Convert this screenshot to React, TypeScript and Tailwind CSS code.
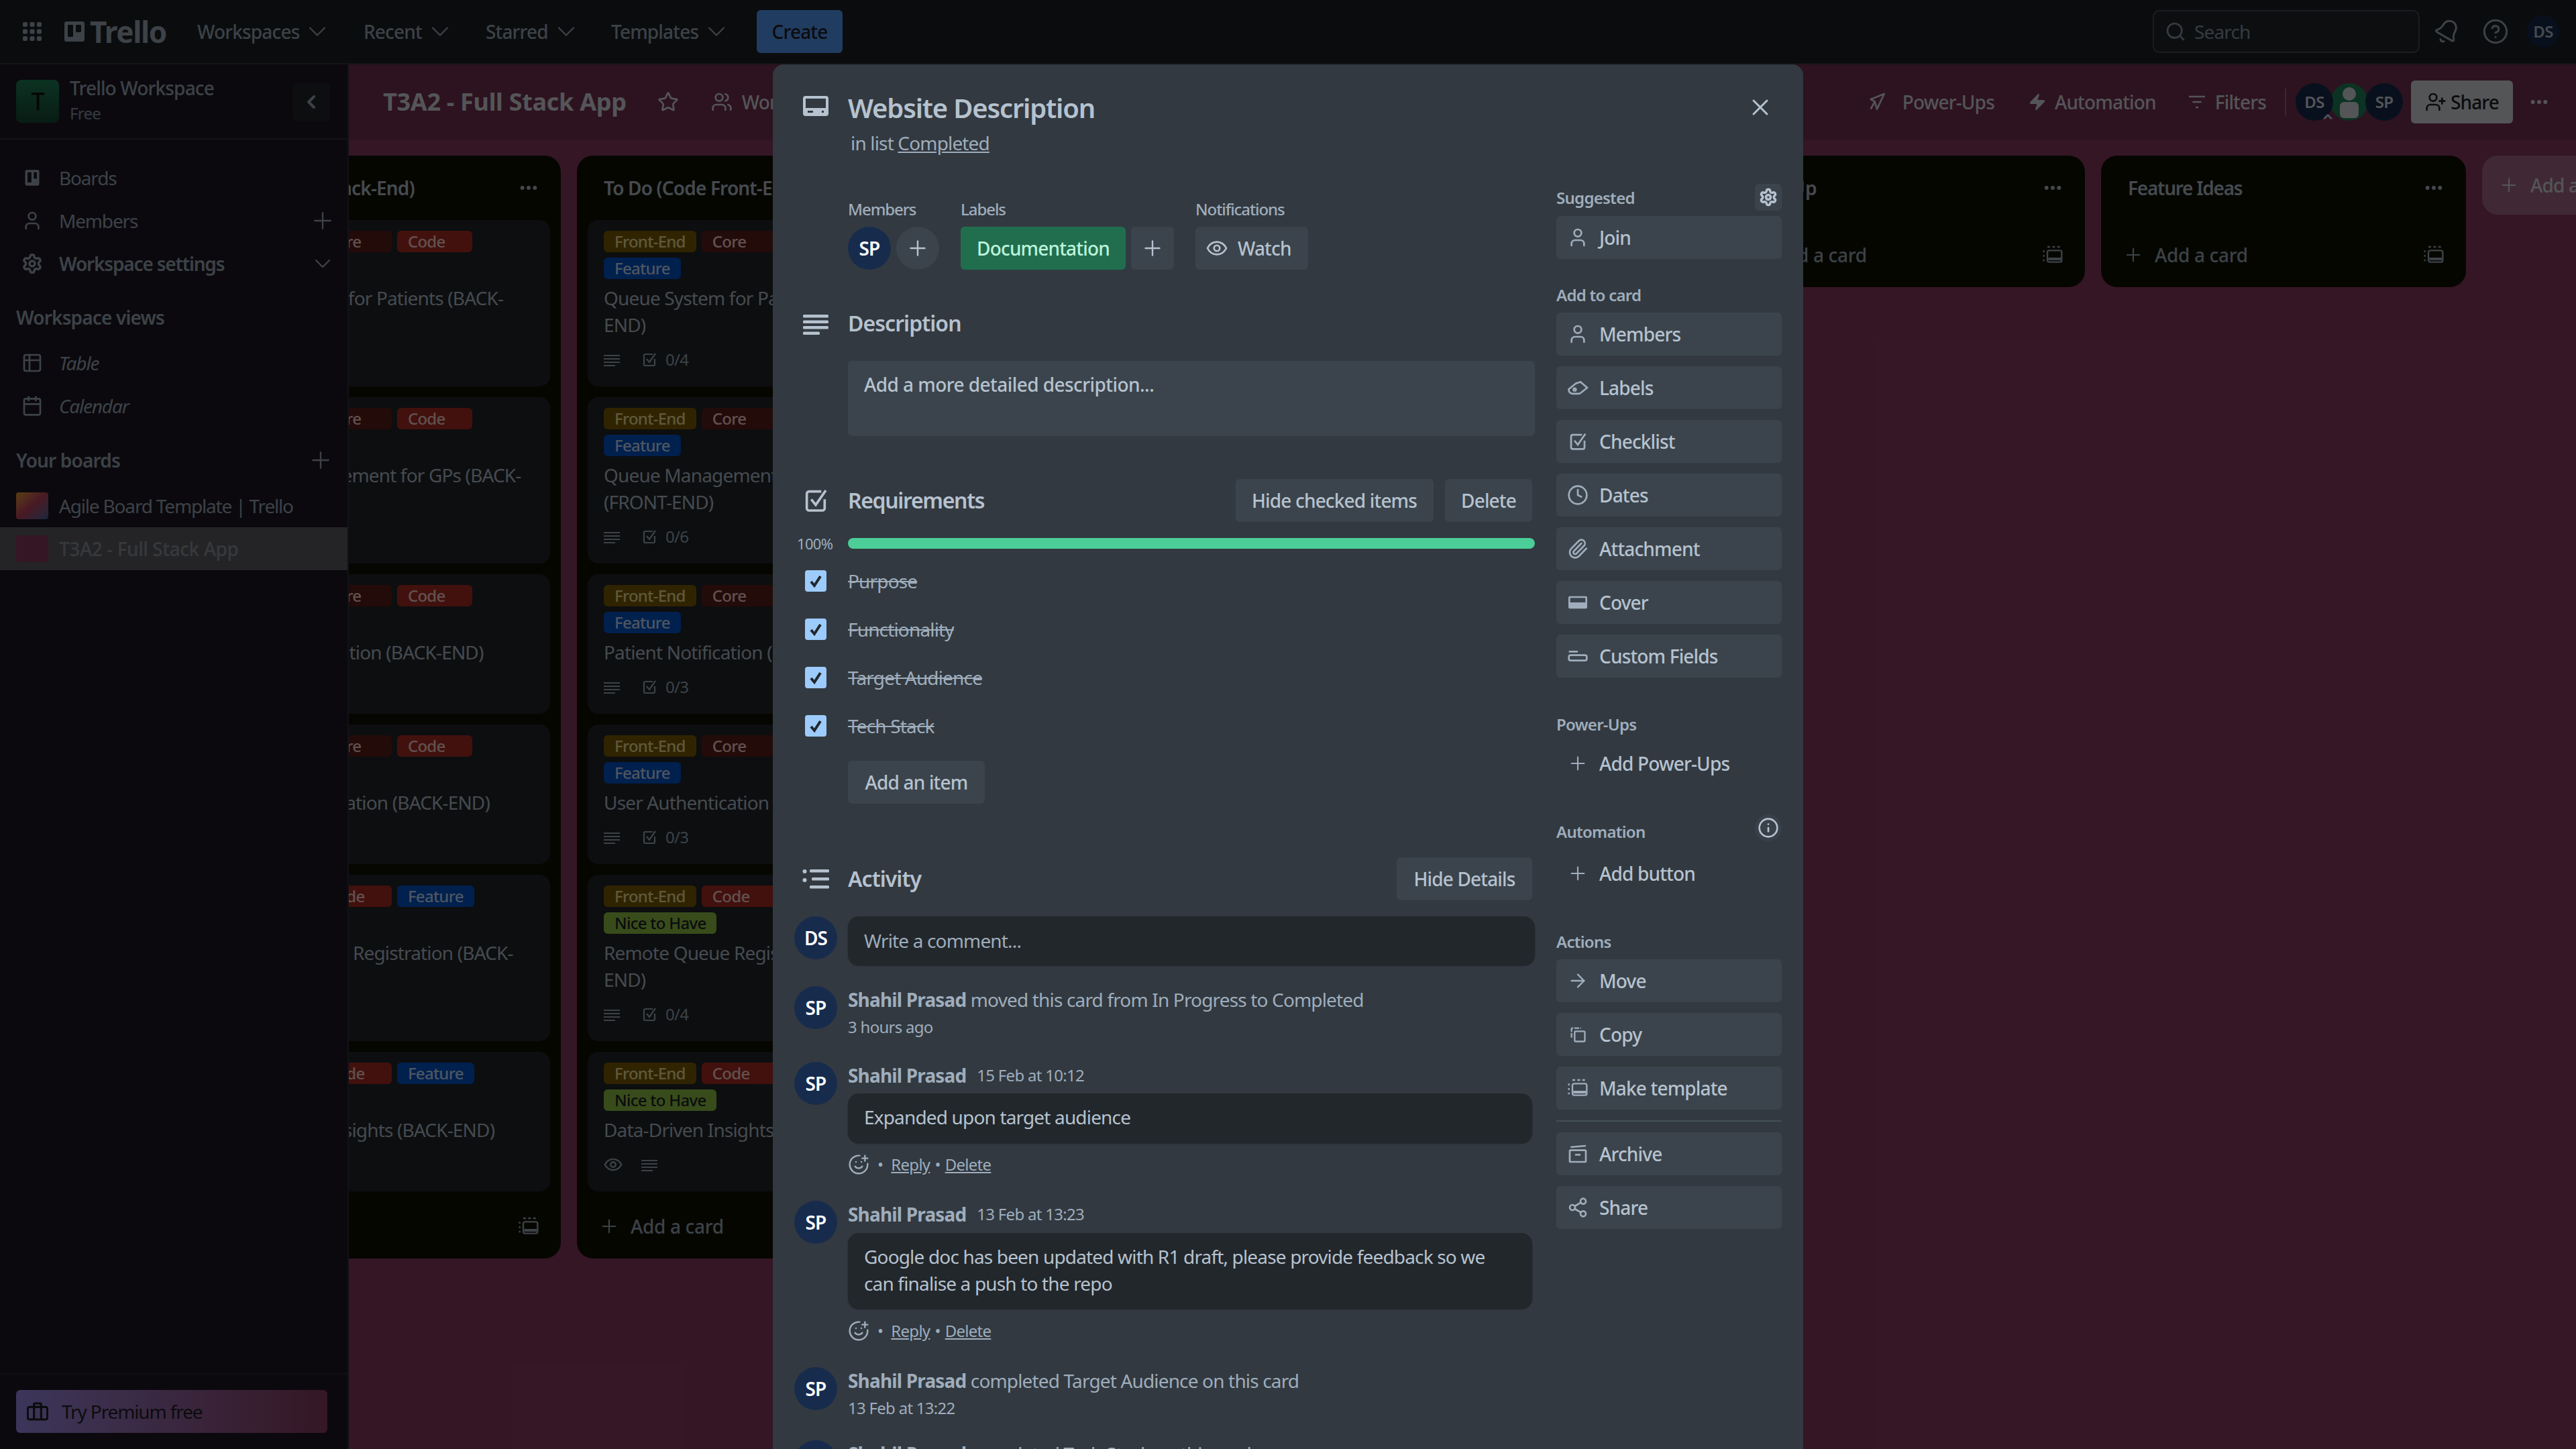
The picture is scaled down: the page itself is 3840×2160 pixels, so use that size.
import React from "react";
import { Star, ChevronDown, ChevronLeft, Plus, X, Search, Bell, CircleHelp, Zap, User, Clock, Paperclip, ArrowRight, Share2, Info, Settings, Users, UserPlus, SmilePlus, Ellipsis, Table2, Calendar } from "lucide-react";

type IP = { className?: string };
const Grid = ({ className }: IP) => (
  <svg className={className} viewBox="0 0 28 28" fill="currentColor">
    {[0, 10.5, 21].map((y) => [0, 10.5, 21].map((x) => <rect key={`${x}-${y}`} x={x} y={y} width="7" height="7" rx="2" />))}
  </svg>
);
const TrelloMark = ({ className }: IP) => (
  <svg className={className} viewBox="0 0 30 30" fill="currentColor">
    <path fillRule="evenodd" d="M3 0h24a3 3 0 0 1 3 3v24a3 3 0 0 1-3 3H3a3 3 0 0 1-3-3V3a3 3 0 0 1 3-3Zm3 5a1 1 0 0 0-1 1v16a1 1 0 0 0 1 1h6a1 1 0 0 0 1-1V6a1 1 0 0 0-1-1H6Zm12 0a1 1 0 0 0-1 1v9a1 1 0 0 0 1 1h6a1 1 0 0 0 1-1V6a1 1 0 0 0-1-1h-6Z" />
  </svg>
);
const CardIc = ({ className }: IP) => (
  <svg className={className} viewBox="0 0 38 30" fill="currentColor">
    <path fillRule="evenodd" d="M4 0h30a4 4 0 0 1 4 4v22a4 4 0 0 1-4 4H4a4 4 0 0 1-4-4V4a4 4 0 0 1 4-4Zm0 4v14h30V4H4Zm3 18v3h8v-3H7Zm24 0h-3v3h3v-3Z" />
  </svg>
);
const DescIc = ({ className }: IP) => (
  <svg className={className} viewBox="0 0 38 30" fill="currentColor">
    <rect x="0" y="0" width="38" height="4.5" rx="1.5" /><rect x="0" y="8.5" width="38" height="4.5" rx="1.5" /><rect x="0" y="17" width="38" height="4.5" rx="1.5" /><rect x="0" y="25.5" width="25" height="4.5" rx="1.5" />
  </svg>
);
const CheckIc = ({ className }: IP) => (
  <svg className={className} viewBox="0 0 24 24" fill="none" stroke="currentColor" strokeWidth="2.2">
    <path d="M20 11v8a2 2 0 0 1-2 2H6a2 2 0 0 1-2-2V6a2 2 0 0 1 2-2h11" /><path d="M8 11l4 5 9-13" />
  </svg>
);
const ActIc = ({ className }: IP) => (
  <svg className={className} viewBox="0 0 40 30" fill="currentColor">
    <circle cx="3.5" cy="4" r="3" /><circle cx="3.5" cy="17" r="3" /><rect x="11" y="1" width="29" height="4.5" rx="1.5" /><rect x="14" y="13" width="26" height="4.5" rx="1.5" /><rect x="11" y="25" width="29" height="4.5" rx="1.5" />
  </svg>
);
const LinesIc = ({ className }: IP) => (
  <svg className={className} viewBox="0 0 24 24" fill="currentColor">
    <rect x="0" y="5" width="24" height="2" /><rect x="0" y="10" width="24" height="2" /><rect x="0" y="15" width="24" height="2" /><rect x="0" y="20" width="17" height="2" />
  </svg>
);
const TemplateIc = ({ className }: IP) => (
  <svg className={className} viewBox="0 0 24 24" fill="none" stroke="currentColor" strokeWidth="1.8">
    <rect x="6" y="7" width="16" height="13" rx="2" /><path d="M7 16.5h14" strokeWidth="3" /><path d="M2 7v2M2 12v2M2 17v2M6 3h3M11.5 3h3M17 3h3" />
  </svg>
);
const TagIc = ({ className }: IP) => (
  <svg className={className} viewBox="0 0 24 24" fill="none" stroke="currentColor" strokeWidth="2">
    <path d="M2 13.5 9.5 7.5a3 3 0 0 1 1.5-.6L15 5.5l7.5 6.5-7.5 6a3 3 0 0 1-2 .6H6a4 4 0 0 1-4-4.6Z" /><circle cx="8.5" cy="14" r="1.4" />
  </svg>
);
const CoverIc = ({ className }: IP) => (
  <svg className={className} viewBox="0 0 24 24" fill="currentColor">
    <path fillRule="evenodd" d="M3 5h18a1.5 1.5 0 0 1 1.5 1.5v11A1.5 1.5 0 0 1 21 19H3a1.5 1.5 0 0 1-1.5-1.5v-11A1.5 1.5 0 0 1 3 5Zm.5 2v5h17V7h-17Z" />
  </svg>
);
const FieldsIc = ({ className }: IP) => (
  <svg className={className} viewBox="0 0 24 24" fill="none" stroke="currentColor" strokeWidth="2">
    <path d="M2 7h10" /><rect x="2" y="11" width="20" height="6" rx="2" />
  </svg>
);
const CopyIc = ({ className }: IP) => (
  <svg className={className} viewBox="0 0 24 24" fill="none" stroke="currentColor" strokeWidth="2">
    <rect x="8" y="8" width="13" height="13" rx="1" /><path d="M4 16V5a1 1 0 0 1 1-1h11" strokeDasharray="6 1.5" />
  </svg>
);
const ArchiveIc = ({ className }: IP) => (
  <svg className={className} viewBox="0 0 24 24" fill="none" stroke="currentColor" strokeWidth="2">
    <path d="M4 4.5 21 3" /><rect x="3" y="8" width="18" height="13" rx="1" /><path d="M9 13h6" />
  </svg>
);
const BoardIc = ({ className }: IP) => (
  <svg className={className} viewBox="0 0 24 24" fill="currentColor">
    <path fillRule="evenodd" d="M5 2h14a2 2 0 0 1 2 2v16a2 2 0 0 1-2 2H5a2 2 0 0 1-2-2V4a2 2 0 0 1 2-2Zm1 3v13h5V5H6Zm8 0v8h4V5h-4Z" />
  </svg>
);
const WatchIc = ({ className }: IP) => (
  <svg className={className} viewBox="0 0 24 24" fill="none" stroke="currentColor" strokeWidth="2">
    <path d="M1.5 12C4 7 8 5 12 5s8 2 10.5 7c-2.5 5-6.5 7-10.5 7s-8-2-10.5-7Z" /><circle cx="12" cy="12" r="3.2" />
  </svg>
);
const FilterIc = ({ className }: IP) => (
  <svg className={className} viewBox="0 0 24 24" fill="none" stroke="currentColor" strokeWidth="2">
    <path d="M3 6h18M7 12h10M10.5 18h3" />
  </svg>
);
const RocketIc = ({ className }: IP) => (
  <svg className={className} viewBox="0 0 24 24" fill="none" stroke="currentColor" strokeWidth="2" strokeLinejoin="round">
    <path d="M20 3 5 9l4.500 2.500L12 20 20 3Z" /><path d="M9.500 11.500 5 20" />
  </svg>
);

const Chev = () => <ChevronDown className="w-[44px] h-[44px]" strokeWidth={1.2} />;
const BTN = "bg-[#3B444C] rounded-[6px] text-[#B6C2CF] text-[28px] font-medium flex items-center";

function NavItem({ label, w }: { label: string; w: string }) {
  return <div className={`${w} flex items-center gap-[5px] h-[64px]`}><span>{label}</span><Chev /></div>;
}

function Nav() {
  return (
    <div className="h-[96px] shrink-0 bg-[#1D2125] border-b-[2px] border-[#31383F] flex items-center text-[#9FADBC] text-[28px] font-medium">
      <Grid className="w-[28px] h-[28px] ml-[34px]" />
      <div className="flex items-center ml-[34px] w-[198px] gap-[8px] text-[#9FADBC]">
        <TrelloMark className="w-[30px] h-[30px]" />
        <span className="text-[44px] font-bold leading-none">Trello</span>
      </div>
      <NavItem label="Workspaces" w="w-[248px]" />
      <NavItem label="Recent" w="w-[182px]" />
      <NavItem label="Starred" w="w-[187px]" />
      <NavItem label="Templates" w="w-[217px]" />
      <div className="w-[128px] h-[64px] rounded-[6px] bg-[#579DFF] text-[#1D2125] flex items-center justify-center">Create</div>
      <div className="ml-auto flex items-center">
        <div className="w-[398px] h-[64px] rounded-[10px] border-[2px] border-[#454F59] bg-[#22272B] flex items-center pl-[16px] gap-[12px] font-normal text-[#8C9BAB]">
          <Search className="w-[32px] h-[32px]" strokeWidth={2} /><span>Search</span>
        </div>
        <Bell className="w-[40px] h-[40px] ml-[21px] rotate-[30deg]" strokeWidth={1.8} />
        <CircleHelp className="w-[40px] h-[40px] ml-[32px]" strokeWidth={1.8} />
        <div className="w-[48px] h-[48px] ml-[27px] mr-[25px] rounded-full bg-[#172B4D] flex items-center justify-center text-[24px] font-semibold text-[#B6C2CF]">DS</div>
      </div>
    </div>
  );
}

function SideRow({ icon, label, italic, right, bold }: { icon: React.ReactNode; label: string; italic?: boolean; right?: React.ReactNode; bold?: boolean }) {
  return (
    <div className="h-[64px] flex items-center pl-[32px] pr-[17px]">
      <div className="w-[32px] h-[32px] flex items-center justify-center mr-[24px]">{icon}</div>
      <span className={`tracking-[-0.042em]! ${italic ? "italic" : ""} ${bold ? "font-semibold" : ""}`}>{label}</span>
      {right && <div className="ml-auto">{right}</div>}
    </div>
  );
}

function Sidebar() {
  return (
    <div className="w-[520px] shrink-0 bg-[#1D1A25] border-r-[2px] border-[#30303a] flex flex-col text-[#9FADBC] text-[28px]">
      <div className="h-[112px] shrink-0 border-b-[2px] border-[#31383F] flex items-center pl-[24px] relative">
        <div className="w-[64px] h-[64px] rounded-[8px] bg-gradient-to-b from-[#1F845A] to-[#164B35] flex items-center justify-center text-[36px] font-medium text-[#101214]">T</div>
        <div className="ml-[16px] flex flex-col">
          <span className="text-[28px] font-medium leading-[36px]">Trello Workspace</span>
          <span className="text-[24px] leading-[40px] text-[#8C9BAB]">Free</span>
        </div>
        <div className="absolute left-[436px] top-[28px] w-[56px] h-[56px] rounded-[6px] bg-[#23262b] flex items-center justify-center"><ChevronLeft className="w-[32px] h-[32px]" strokeWidth={3} /></div>
      </div>
      <div className="mt-[25px]">
        <SideRow icon={<BoardIc className="w-[28px] h-[32px]" />} label="Boards" />
        <SideRow icon={<User className="w-[32px] h-[32px]" strokeWidth={2} />} label="Members" right={<Plus className="w-[40px] h-[40px]" strokeWidth={1.4} />} />
        <SideRow icon={<Settings className="w-[32px] h-[32px]" strokeWidth={2.6} />} label="Workspace settings" bold right={<ChevronDown className="w-[40px] h-[40px]" strokeWidth={1.4} />} />
      </div>
      <div className="h-[48px] mt-[24px] flex items-center pl-[24px] font-semibold">Workspace views</div>
      <div className="mt-[12px]">
        <SideRow icon={<Table2 className="w-[32px] h-[32px]" strokeWidth={2} />} label="Table" italic />
        <SideRow icon={<Calendar className="w-[32px] h-[32px]" strokeWidth={2} />} label="Calendar" italic />
      </div>
      <div className="h-[48px] mt-[25px] flex items-center justify-between pl-[24px] pr-[20px] font-semibold">
        <span>Your boards</span><Plus className="w-[40px] h-[40px]" strokeWidth={1.4} />
      </div>
      <div className="mt-[12px] h-[64px] flex items-center pl-[24px]">
        <div className="w-[48px] h-[40px] rounded-[4px] bg-gradient-to-br from-[#f0a020] via-[#c04060] to-[#4060a0] mr-[16px]" />
        <span className="tracking-[-0.042em]!">Agile Board Template | Trello</span>
      </div>
      <div className="h-[64px] flex items-center pl-[24px] bg-[#5F6065]">
        <div className="w-[48px] h-[40px] rounded-[4px] bg-[#8B3C61] mr-[16px]" />
        <span className="text-[#8f97a1] font-medium tracking-[-0.015em]!">T3A2 - Full Stack App</span>
      </div>
      <div className="mt-auto h-[113px] border-t-[2px] border-[#2b2a33] flex items-start pt-[23px] px-[24px]">
        <div className="w-[464px] h-[64px] rounded-[6px] bg-gradient-to-r from-[#9F8FEF] to-[#8B3C61] flex items-center pl-[16px] text-[#1D2125]">
          <svg className="w-[32px] h-[32px]" viewBox="0 0 24 24" fill="none" stroke="currentColor" strokeWidth="2.4"><rect x="1" y="7" width="22" height="14" rx="2" /><path d="M8 7V4a1 1 0 0 1 1-1h6a1 1 0 0 1 1 1v3M8 7v14M16 7v14" /></svg>
          <span className="ml-[20px] tracking-[-0.04em]!">Try Premium free</span>
        </div>
      </div>
    </div>
  );
}

const LABELS: Record<string, string> = {
  "Front-End": "bg-[#7F5F01] text-[#F8E6A0]",
  "Back-End": "bg-[#7F5F01] text-[#F8E6A0]",
  Core: "bg-[#5D1F1A] text-[#FFD5D2]",
  Code: "bg-[#AE2E24] text-[#FFD5D2]",
  Feature: "bg-[#0055CC] text-[#CCE0FF]",
  "Nice to Have": "bg-[#94C748] text-[#1D2125]",
};

function Chip({ t }: { t: string }) {
  return <div className={`${LABELS[t]} h-[32px] min-w-[112px] rounded-[6px] px-[16px] text-[24px] leading-[32px] font-medium whitespace-nowrap`}>{t}</div>;
}

type CardT = { labels: string[]; title: string; tail?: string; badge?: string; eye?: boolean };

function Card({ labels, title, tail, badge, eye }: CardT) {
  return (
    <div className="bg-[#22272B] rounded-[16px] px-[24px] pt-[16px] pb-[16px] shrink-0">
      <div className="flex flex-wrap gap-[8px]">{labels.map((l) => <Chip key={l} t={l} />)}</div>
      <div className="mt-[8px] text-[28px] leading-[40px] text-[#B6C2CF]">{title}{tail && " "}{tail && <span className="whitespace-nowrap">{tail}</span>}</div>
      <div className="h-[48px] mt-[8px] flex items-center text-[#9FADBC]">
        {eye ? (
          <>
            <WatchIc className="w-[28px] h-[28px] mr-[28px]" />
            <LinesIc className="w-[24px] h-[24px]" />
          </>
        ) : badge ? (
          <>
            <LinesIc className="w-[24px] h-[24px] mr-[32px]" />
            <CheckIc className="w-[24px] h-[24px]" />
            <span className="ml-[12px] text-[24px]">{badge}</span>
          </>
        ) : null}
      </div>
    </div>
  );
}

const cardData = (kind: string, chip: string, keep: boolean): CardT[] => [
  { labels: [chip, "Core", "Code", "Feature"], title: `Queue System for Patients (${kind})`, badge: "0/4" },
  keep
    ? { labels: [chip, "Core", "Code", "Feature"], title: "Queue Management for GPs", tail: `(${kind})`, badge: "0/6" }
    : { labels: [chip, "Core", "Code", "Feature"], title: `Queue Management for GPs (${kind})`, badge: "0/6" },
  { labels: [chip, "Core", "Code", "Feature"], title: `Patient Notification (${kind})`, badge: "0/3" },
  { labels: [chip, "Core", "Code", "Feature"], title: `User Authentication (${kind})`, badge: "0/3" },
  { labels: [chip, "Code", "Feature", "Nice to Have"], title: `Remote Queue Registration (${kind})`, badge: "0/4" },
  { labels: [chip, "Code", "Feature", "Nice to Have"], title: `Data-Driven Insights (${kind})`, eye: true },
];

function List({ title, cards, titleCls = "" }: { title: string; cards?: CardT[]; titleCls?: string }) {
  return (
    <div className="w-[544px] shrink-0 bg-[#101204] rounded-[24px] flex flex-col">
      <div className="h-[96px] flex items-center justify-between pl-[40px] pr-[32px] text-[28px] font-semibold text-[#B6C2CF]">
        <span className={`whitespace-nowrap ${titleCls}`}>{title}</span>
        <Ellipsis className="w-[32px] h-[32px]" strokeWidth={2.4} />
      </div>
      <div className="flex flex-col gap-[16px] px-[16px] pb-[20px]">
        {cards?.map((c) => <Card key={c.title} {...c} />)}
      </div>
      <div className="h-[64px] mb-[16px] pl-[32px] pr-[32px] flex items-center text-[#9FADBC] text-[28px] font-medium">
        <Plus className="w-[32px] h-[32px] mr-[16px]" strokeWidth={1.6} />
        <span className="tracking-[-0.012em]!">Add a card</span>
        <TemplateIc className="w-[32px] h-[32px] ml-auto" />
      </div>
    </div>
  );
}

function Board() {
  return (
    <div className="flex-1 min-w-0 bg-[#8B3C61] flex flex-col overflow-hidden">
      <div className="h-[112px] shrink-0 bg-[#000000]/15 flex items-center pl-[51px] text-[#DCDFE4] text-[28px] font-medium">
        <span className="text-[36px] font-bold whitespace-nowrap tracking-[-0.008em]!">T3A2 - Full Stack App</span>
        <Star className="w-[32px] h-[32px] ml-[46px]" strokeWidth={2} />
        <Users className="w-[32px] h-[32px] ml-[48px]" strokeWidth={2} />
        <span className="ml-[14px] whitespace-nowrap">Workspace visible</span>
        <div className="ml-auto flex items-center text-[#DCDFE4]">
          <RocketIc className="w-[32px] h-[32px]" />
          <span className="ml-[22px]">Power-Ups</span>
          <Zap className="w-[28px] h-[32px] ml-[50px]" fill="currentColor" strokeWidth={1} />
          <span className="ml-[12px]">Automation</span>
          <FilterIc className="w-[32px] h-[32px] ml-[45px]" />
          <span className="ml-[11px]">Filters</span>
          <div className="w-[2px] h-[40px] bg-[#ffffff]/25 ml-[28px] mr-[14px]" />
          <div className="flex items-center">
            <div className="relative w-[56px] h-[56px] rounded-full bg-[#172B4D] flex items-center justify-center text-[24px] font-semibold text-[#DCDFE4]">DS
              <ChevronDown className="absolute right-[-2px] bottom-[-4px] w-[20px] h-[20px] rotate-180 text-[#CCE0FF]" strokeWidth={3} />
            </div>
            <div className="w-[56px] h-[56px] rounded-full bg-[#1F845A] -ml-[4px] flex items-center justify-center overflow-hidden">
              <svg className="w-[40px] h-[56px]" viewBox="0 0 20 28" fill="#DCDFE4"><circle cx="10" cy="8" r="5" /><rect x="3" y="14" width="14" height="12" rx="3" /></svg>
            </div>
            <div className="w-[56px] h-[56px] rounded-full bg-[#172B4D] -ml-[4px] flex items-center justify-center text-[24px] font-semibold text-[#DCDFE4]">SP</div>
          </div>
          <div className="w-[152px] h-[64px] ml-[12px] rounded-[6px] bg-[#DCDFE4] text-[#1D2125] flex items-center justify-center gap-[6px]">
            <UserPlus className="w-[32px] h-[32px]" strokeWidth={2} />Share
          </div>
          <Ellipsis className="w-[32px] h-[32px] ml-[23px] mr-[39px]" strokeWidth={2.4} />
        </div>
      </div>
      <div className="flex-1 min-h-0 pt-[24px] flex items-start gap-[24px] -ml-[228px]">
        <List title="To Do (Code Back-End)" cards={cardData("BACK-END", "Back-End", false)} />
        <List title="To Do (Code Front-End)" cards={cardData("FRONT-END", "Front-End", true)} />
        <List title="In Progress" />
        <List title="Completed" />
        <List title="Sign Up" titleCls="tracking-normal!" />
        <List title="Feature Ideas" titleCls="tracking-[-0.045em]!" />
        <div className="w-[544px] h-[88px] shrink-0 rounded-[24px] bg-[#ffffff]/25 flex items-center pl-[24px] text-[28px] font-medium text-[#DCDFE4]">
          <Plus className="w-[32px] h-[32px] mr-[16px]" strokeWidth={1.6} />Add another list
        </div>
      </div>
    </div>
  );
}

const Gut = ({ children }: { children: React.ReactNode }) => <div className="w-[40px] ml-[44px] mr-[28px] shrink-0 flex justify-center items-center">{children}</div>;
const Ava = ({ t }: { t: string }) => <div className="w-[64px] h-[64px] shrink-0 rounded-full bg-[#172B4D] text-white flex items-center justify-center text-[28px] font-semibold">{t}</div>;

function SideBtn({ icon, label, plain }: { icon: React.ReactNode; label: string; plain?: boolean }) {
  return (
    <div className={`h-[64px] w-[336px] rounded-[6px] flex items-center pl-[16px] text-[#B6C2CF] text-[28px] font-medium ${plain ? "" : "bg-[#3B444C]"}`}>
      <div className="w-[32px] h-[32px] flex items-center justify-center text-[#9FADBC]">{icon}</div>
      <span className="ml-[16px]">{label}</span>
    </div>
  );
}
const SideLabel = ({ children, className = "" }: { children: React.ReactNode; className?: string }) => <div className={`h-[32px] leading-[32px] text-[24px] font-semibold text-[#9FADBC] ${className}`}>{children}</div>;
const ic = "w-[32px] h-[32px]";

function Reactions() {
  return (
    <div className="h-[40px] flex items-center text-[24px] text-[#9FADBC]">
      <SmilePlus className="w-[32px] h-[32px]" strokeWidth={1.8} />
      <span className="ml-[12px]">•</span>
      <span className="ml-[12px] underline">Reply</span>
      <span className="ml-[7px]">•</span>
      <span className="ml-[7px] underline">Delete</span>
    </div>
  );
}

function Comment({ time, children, mt, boxH, boxMt, rMt }: { time: string; children: React.ReactNode; mt: string; boxH: string; boxMt: string; rMt: string }) {
  return (
    <div className={`flex pl-[32px] ${mt}`}>
      <Ava t="SP" />
      <div className="ml-[16px] w-[1020px]">
        <div className="h-[40px] flex items-center gap-[16px]">
          <span className="text-[28px] font-bold text-[#9FADBC]">Shahil Prasad</span>
          <span className="text-[24px] text-[#9FADBC] pb-[1px]">{time}</span>
        </div>
        <div className={`${boxMt} ${boxH} bg-[#22272B] rounded-[16px] shadow-[0_2px_2px_rgba(0,0,0,0.35)] px-[24px] pb-[3px] flex flex-col justify-center text-[28px] leading-[40px] text-[#B6C2CF]`}>{children}</div>
        <div className={rMt}><Reactions /></div>
      </div>
    </div>
  );
}

function ActionEntry({ text, time, mt }: { text: string; time: string; mt: string }) {
  return (
    <div className={`flex pl-[32px] ${mt}`}>
      <Ava t="SP" />
      <div className="ml-[16px]">
        <div className="h-[40px] leading-[40px] text-[28px] text-[#9FADBC]"><span className="font-bold">Shahil Prasad</span> {text}</div>
        <div className="h-[32px] leading-[32px] mt-[5px] text-[24px] text-[#9FADBC]">{time}</div>
      </div>
    </div>
  );
}

function Modal() {
  return (
    <div className="absolute left-[1152px] top-[96px] w-[1536px] h-[2064px] bg-[#323940] rounded-t-[16px] overflow-hidden">
      <X className="absolute left-[1452px] top-[44px] w-[40px] h-[40px] text-[#B6C2CF]" strokeWidth={1.8} />
      <div className="pt-[43px] pb-[2px]">
        <div className="flex items-center h-[48px]">
          <Gut><CardIc className="w-[38px] h-[30px] text-[#B6C2CF] -mt-[10px]" /></Gut>
          <span className="text-[40px] font-semibold text-[#B6C2CF] leading-[48px] mb-[4px]">Website Description</span>
        </div>
        <div className="mt-[6px] ml-[116px] h-[40px] leading-[40px] text-[28px] text-[#9FADBC]">in list <span className="underline">Completed</span></div>
      </div>
      <div className="flex">
        <div className="w-[1136px] shrink-0">
          <div className="mt-[61px] ml-[112px] flex text-[24px] font-medium text-[#9FADBC]">
            <div className="w-[168px]">
              <div className="h-[32px] leading-[32px] tracking-[-0.045em]!">Members</div>
              <div className="mt-[10px] flex gap-[8px]">
                <Ava t="SP" />
                <div className="w-[64px] h-[64px] rounded-full bg-[#3B444C] flex items-center justify-center text-[#B6C2CF]"><Plus className="w-[36px] h-[36px]" strokeWidth={1.6} /></div>
              </div>
            </div>
            <div className="w-[350px]">
              <div className="h-[32px] leading-[32px] tracking-[-0.045em]!">Labels</div>
              <div className="mt-[10px] flex gap-[8px]">
                <div className="w-[246px] h-[64px] rounded-[6px] bg-[#216E4E] text-[#BAF3DB] text-[28px] font-medium flex items-center justify-center">Documentation</div>
                <div className={`${BTN} w-[64px] h-[64px] justify-center`}><Plus className="w-[36px] h-[36px]" strokeWidth={1.6} /></div>
              </div>
            </div>
            <div>
              <div className="h-[32px] leading-[32px] tracking-[-0.045em]!">Notifications</div>
              <div className={`${BTN} mt-[10px] w-[168px] h-[64px] pl-[16px] gap-[15px]`}><WatchIc className={ic} />Watch</div>
            </div>
          </div>
          <div className="mt-[58px] flex items-center h-[48px]">
            <Gut><DescIc className="w-[38px] h-[30px] text-[#B6C2CF]" /></Gut>
            <span className="text-[32px] font-semibold text-[#B6C2CF] mb-[4px]">Description</span>
          </div>
          <div className="mt-[30px] ml-[112px] w-[1024px] h-[112px] rounded-[6px] bg-[#3B444C] px-[24px] pt-[15px] text-[28px] leading-[40px] font-medium text-[#B6C2CF] tracking-[-0.02em]!">Add a more detailed description...</div>
          <div className="mt-[64px] flex items-center h-[64px]">
            <Gut><CheckIc className="w-[40px] h-[40px] text-[#B6C2CF]" /></Gut>
            <span className="text-[32px] font-semibold text-[#B6C2CF] tracking-[-0.042em]!">Requirements</span>
            <div className={`${BTN} ml-auto h-[64px] w-[295px] pl-[24px]`}>Hide checked items</div>
            <div className={`${BTN} ml-[17px] mr-[4px] h-[64px] w-[130px] justify-center`}>Delete</div>
          </div>
          <div className="mt-[24px] flex items-center h-[16px]">
            <div className="w-[112px] pl-[36px] text-[22px] text-[#9FADBC] whitespace-nowrap">100%</div>
            <div className="w-[1024px] h-[16px] rounded-[8px] bg-[#4BCE97]" />
          </div>
          <div className="mt-[12px]">
            {["Purpose", "Functionality", "Target Audience", "Tech Stack"].map((t) => (
              <div key={t} className="h-[72px] flex items-center">
                <Gut>
                  <div className="w-[32px] h-[32px] rounded-[4px] bg-[#9DCBFB] flex items-center justify-center">
                    <svg className="w-[24px] h-[24px]" viewBox="0 0 24 24" fill="none" stroke="#22272B" strokeWidth="4"><path d="M5 13l5 6 9-14" /></svg>
                  </div>
                </Gut>
                <span className="text-[28px] line-through text-[#9FADBC]">{t}</span>
              </div>
            ))}
          </div>
          <div className={`${BTN} mt-[16px] ml-[112px] w-[204px] h-[64px] justify-center`}>Add an item</div>
          <div className="mt-[80px] flex items-center h-[64px]">
            <Gut><ActIc className="w-[40px] h-[30px] text-[#B6C2CF]" /></Gut>
            <span className="text-[32px] font-semibold text-[#B6C2CF]">Activity</span>
            <div className={`${BTN} ml-auto mr-[4px] h-[64px] w-[202px] justify-center`}>Hide Details</div>
          </div>
          <div className="mt-[24px] flex pl-[32px]">
            <Ava t="DS" />
            <div className="ml-[16px] w-[1024px] h-[72px] rounded-[16px] bg-[#22272B] shadow-[0_2px_2px_rgba(0,0,0,0.35)] px-[24px] flex items-center text-[28px] text-[#9FADBC]">Write a comment...</div>
          </div>
          <ActionEntry mt="mt-[32px]" text="moved this card from In Progress to Completed" time="3 hours ago" />
          <Comment mt="mt-[36px]" boxMt="mt-[7px]" rMt="mt-[13px]" time="15 Feb at 10:12" boxH="h-[73px]">Expanded upon target audience</Comment>
          <Comment mt="mt-[34px]" boxMt="mt-[8px]" rMt="mt-[14px]" time="13 Feb at 13:23" boxH="h-[112px]"><div>Google doc has been updated with R1 draft, please provide feedback so we</div><div>can finalise a push to the repo</div></Comment>
          <ActionEntry mt="mt-[34px]" text="completed Target Audience on this card" time="13 Feb at 13:22" />
          <ActionEntry mt="mt-[32px]" text="completed Tech Stack on this card" time="13 Feb at 13:22" />
        </div>
        <div className="ml-[32px] w-[336px] pt-[39px]">
          <div className="flex justify-between h-[40px]">
            <SideLabel className="mt-[5px]">Suggested</SideLabel>
            <div className="w-[40px] h-[40px] rounded-[6px] bg-[#3B444C] flex items-center justify-center text-[#B6C2CF]"><Settings className="w-[28px] h-[28px]" strokeWidth={3} /></div>
          </div>
          <div className="mt-[8px]"><SideBtn icon={<User className={ic} strokeWidth={2} />} label="Join" /></div>
          <SideLabel className="mt-[38px]">Add to card</SideLabel>
          <div className="mt-[10px] flex flex-col gap-[16px]">
            <SideBtn icon={<User className={ic} strokeWidth={2} />} label="Members" />
            <SideBtn icon={<TagIc className={ic} />} label="Labels" />
            <SideBtn icon={<CheckIc className="w-[30px] h-[30px]" />} label="Checklist" />
            <SideBtn icon={<Clock className={ic} strokeWidth={2} />} label="Dates" />
            <SideBtn icon={<Paperclip className={ic} strokeWidth={2} />} label="Attachment" />
            <SideBtn icon={<CoverIc className={ic} />} label="Cover" />
            <SideBtn icon={<FieldsIc className={ic} />} label="Custom Fields" />
          </div>
          <SideLabel className="mt-[54px]">Power-Ups</SideLabel>
          <div className="mt-[10px]"><SideBtn plain icon={<Plus className={ic} strokeWidth={1.6} />} label="Add Power-Ups" /></div>
          <div className="mt-[44px] flex justify-between items-start h-[42px]">
            <SideLabel className="mt-[10px]">Automation</SideLabel>
            <div className="w-[40px] h-[40px] rounded-full bg-[#38414A] flex items-center justify-center text-[#B6C2CF]"><Info className="w-[32px] h-[32px]" strokeWidth={2} /></div>
          </div>
          <div className="mt-[14px]"><SideBtn plain icon={<Plus className={ic} strokeWidth={1.6} />} label="Add button" /></div>
          <SideLabel className="mt-[54px]">Actions</SideLabel>
          <div className="mt-[10px] flex flex-col gap-[16px]">
            <SideBtn icon={<ArrowRight className={ic} strokeWidth={1.8} />} label="Move" />
            <SideBtn icon={<CopyIc className="w-[28px] h-[28px]" />} label="Copy" />
            <SideBtn icon={<TemplateIc className={ic} />} label="Make template" />
          </div>
          <div className="my-[16px] h-[2px] bg-[#454F59]" />
          <div className="flex flex-col gap-[16px]">
            <SideBtn icon={<ArchiveIc className={ic} />} label="Archive" />
            <SideBtn icon={<Share2 className={ic} strokeWidth={2} />} label="Share" />
          </div>
        </div>
      </div>
    </div>
  );
}

export default function App() {
  return (
    <div className="relative w-[3840px] h-[2160px] overflow-hidden flex flex-col [font-family:'Noto_Sans',sans-serif] [&_*]:tracking-[-0.03em]">
      <Nav />
      <div className="flex-1 min-h-0 flex">
        <div className="relative z-10 flex"><Sidebar /></div>
        <Board />
      </div>
      <div className="absolute inset-0 z-20 bg-[#000000]/62" />
      <div className="z-30"><Modal /></div>
    </div>
  );
}
